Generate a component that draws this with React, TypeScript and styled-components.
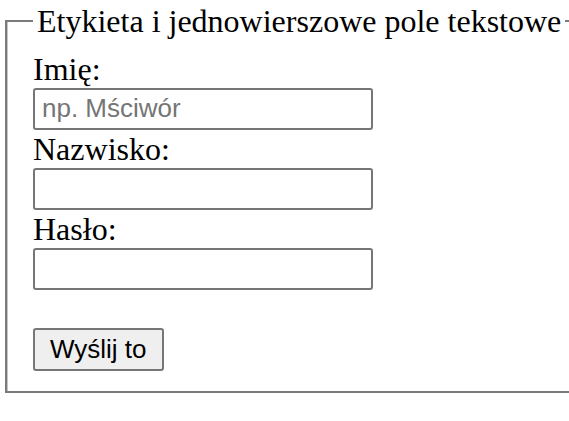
import styled, { createGlobalStyle } from "styled-components";

const GlobalStyle = createGlobalStyle`
  html, body {
    margin: 0;
    padding: 0;
    overflow: hidden;
    background: #fff;
  }
`;

const Page = styled.div`
  padding: 3px 0 0 5px;
`;

// groove look: dark outer line, light inner line on the left, light under the bottom
const Fieldset = styled.fieldset`
  width: 640px;
  margin: 0;
  padding: 11px 20px 20px 26px;
  border: 2px solid #7b7b7b;
  box-shadow: inset 1px 0 0 #c4c4c4, 0 1px 0 #c4c4c4;
  font-family: "Liberation Serif", "Times New Roman", serif;
  font-size: 32px;
  color: #000;
`;

const Legend = styled.legend`
  padding: 0 4px;
  line-height: 36.8px;
`;

const Label = styled.label`
  display: block;
  line-height: 37px;
`;

const Input = styled.input`
  display: block;
  box-sizing: border-box;
  width: 340px;
  height: 42px;
  margin: 0 0 1px;
  padding: 0 7px;
  border: 2px solid #767676;
  border-radius: 3px;
  font-family: "Liberation Sans", Arial, sans-serif;
  font-size: 26px;
  color: #000;
  background: #fff;

  &::placeholder {
    color: #757575;
  }
`;

const Submit = styled.button`
  display: block;
  box-sizing: border-box;
  height: 43px;
  margin-top: 38px;
  padding: 0 15px;
  border: 2px solid #767676;
  border-radius: 3px;
  background: #efefef;
  font-family: "Liberation Sans", Arial, sans-serif;
  font-size: 26px;
  color: #000;
`;

export default function App() {
  return (
    <>
      <GlobalStyle />
      <Page>
        <form onSubmit={(e) => e.preventDefault()}>
          <Fieldset>
            <Legend>Etykieta i jednowierszowe pole tekstowe</Legend>
            <Label htmlFor="imie">Imię:</Label>
            <Input id="imie" type="text" placeholder="np. Mściwór" />
            <Label htmlFor="nazwisko">Nazwisko:</Label>
            <Input id="nazwisko" type="text" />
            <Label htmlFor="haslo">Hasło:</Label>
            <Input id="haslo" type="password" />
            <Submit type="submit">Wyślij to</Submit>
          </Fieldset>
        </form>
      </Page>
    </>
  );
}
